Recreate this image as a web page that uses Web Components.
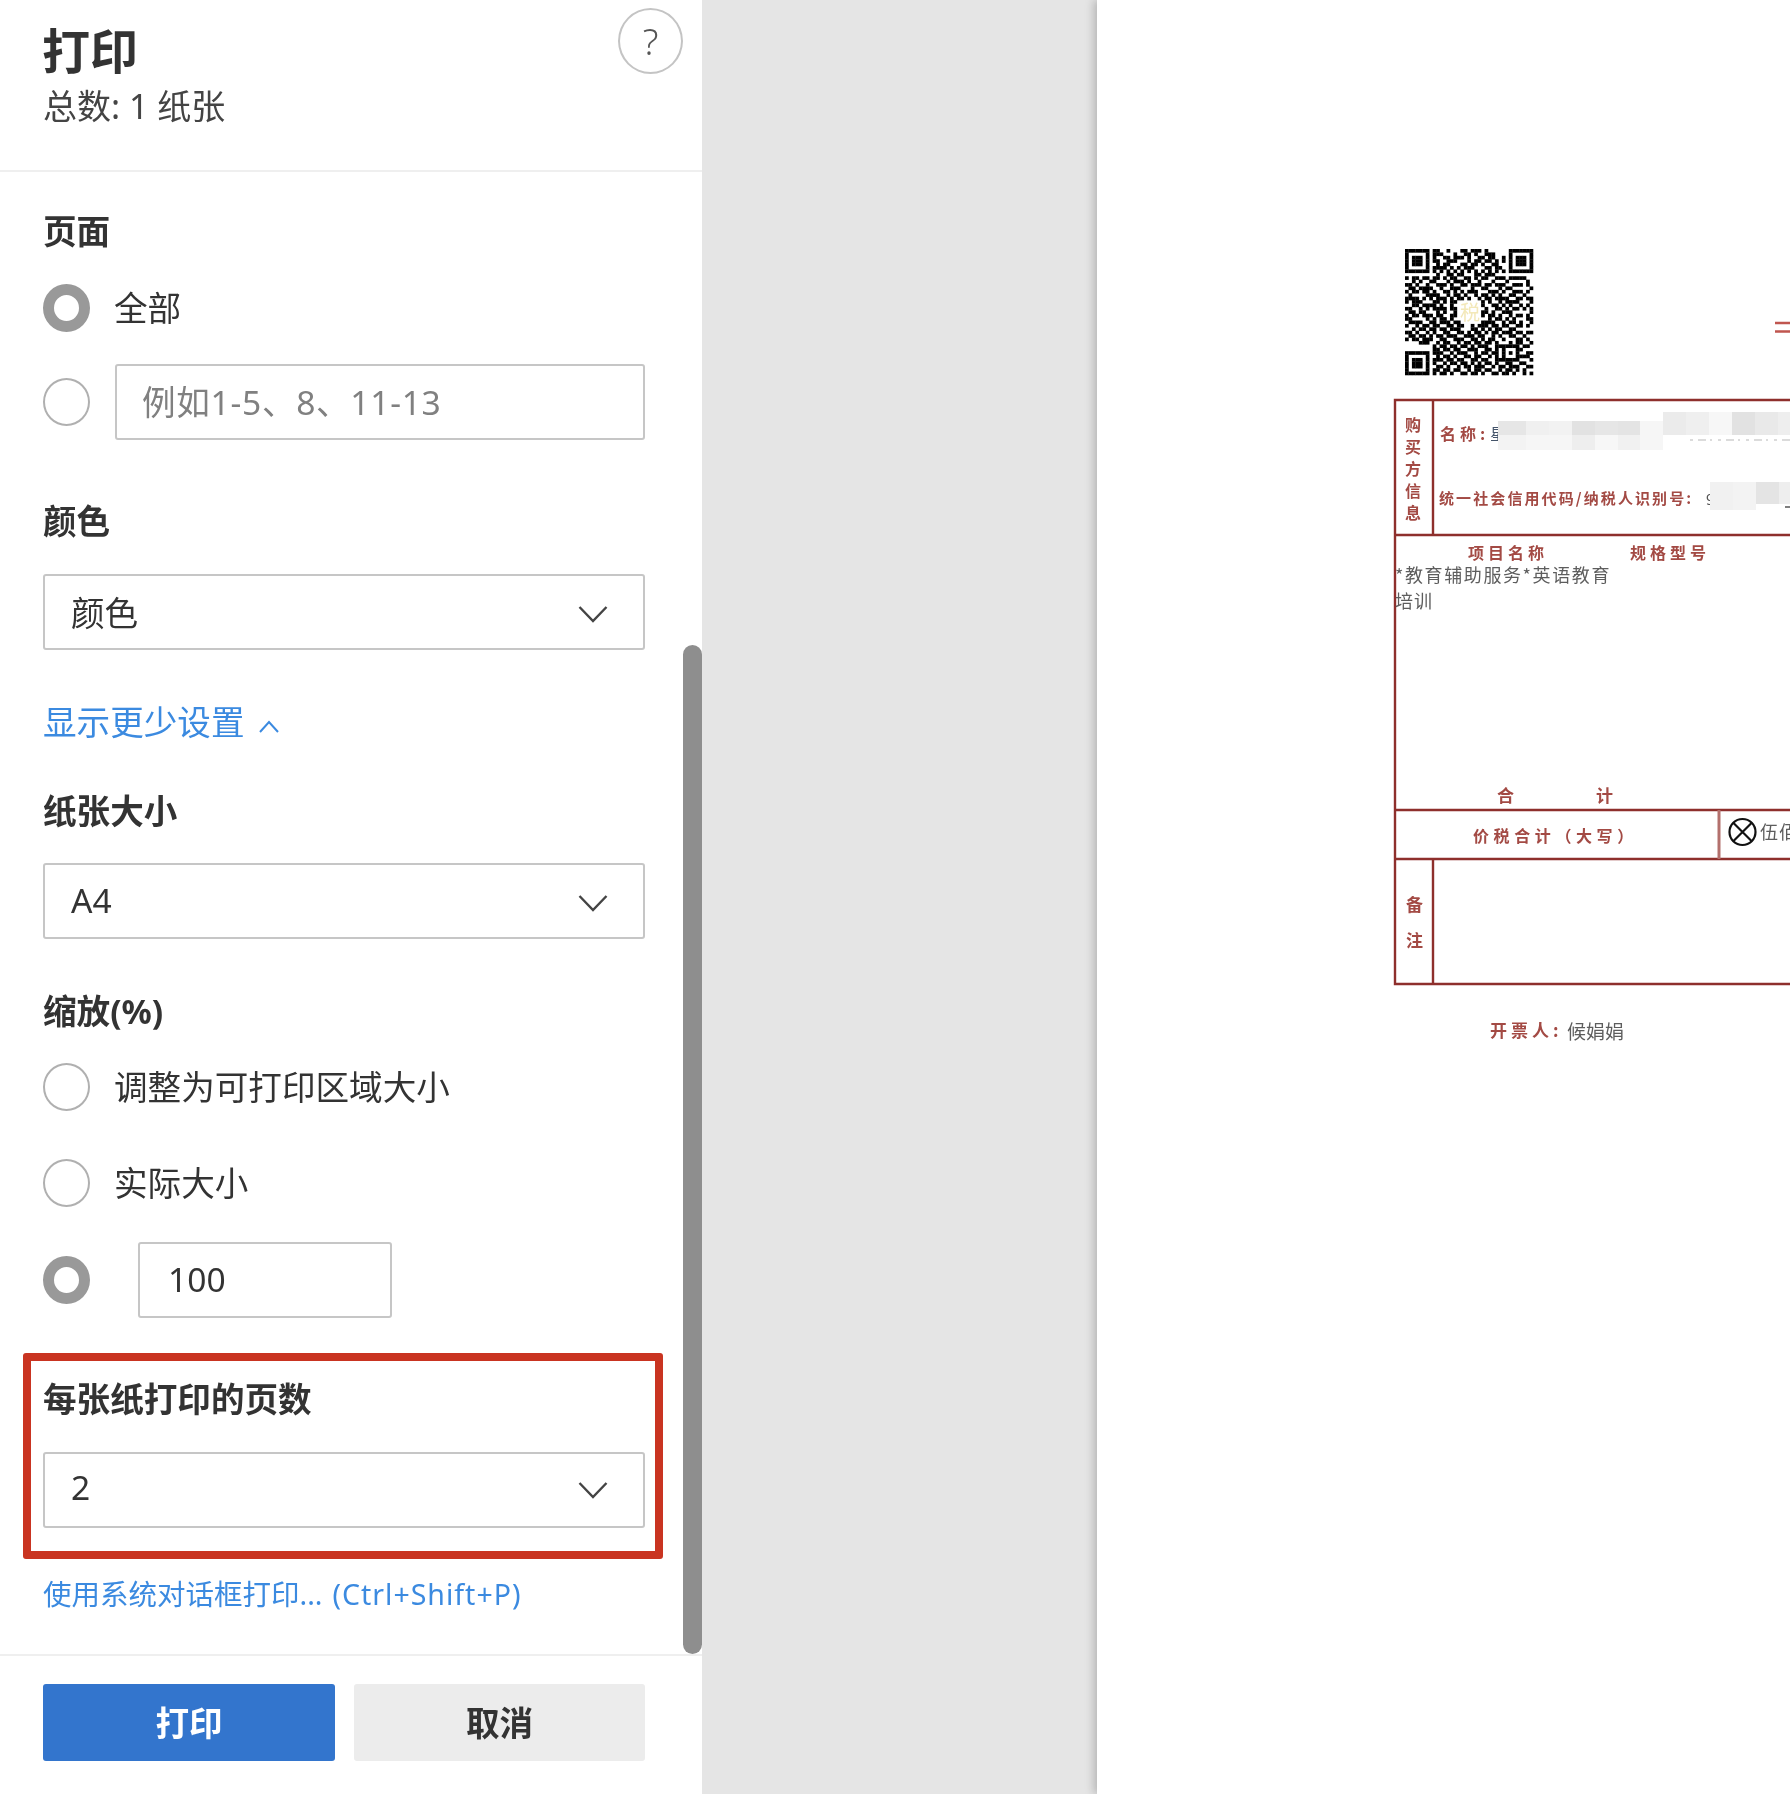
<!DOCTYPE html>
<html lang="zh">
<head>
<meta charset="utf-8">
<title>打印</title>
<style>
  html, body { margin: 0; height: 100%; overflow: hidden; background: #e5e5e5; }
  body { font-family: "Noto Sans", "Noto Sans CJK SC", sans-serif; color: #333; }
</style>
</head>
<body>
<print-dialog></print-dialog>

<script>
const FONT = '"Noto Sans", "Noto Sans CJK SC", sans-serif';

class FieldLabel extends HTMLElement {
  constructor() {
    super();
    this.attachShadow({ mode: 'open' }).innerHTML = `
      <style>
        :host { display: block; height: 40px; font: 700 33.6px/40px ${FONT}; color: #333; white-space: nowrap; }
      </style>
      <slot></slot>`;
  }
}

class RadioRow extends HTMLElement {
  constructor() {
    super();
    this.attachShadow({ mode: 'open' }).innerHTML = `
      <style>
        :host { display: flex; align-items: center; gap: 24px; font: 33.6px/40px ${FONT}; color: #333; white-space: nowrap; }
        .dot { flex: none; width: 47px; height: 48px; box-sizing: border-box; border-radius: 50%; border: 2px solid #b0b0b0; background: #fff; }
        :host([checked]) .dot { border: 11px solid #999; }
        .body { display: flex; flex: 1; min-height: 48px; align-items: center; }
      </style>
      <span class="dot"></span>
      <span class="body"><slot></slot></span>`;
  }
}

class TextBox extends HTMLElement {
  constructor() {
    super();
    this.attachShadow({ mode: 'open' }).innerHTML = `
      <style>
        :host { display: flex; align-items: center; box-sizing: border-box; height: 76px; padding-left: 25px; border: 2px solid #c6c6c6; border-radius: 3px; background: #fff; font: 33.6px/40px ${FONT}; color: #333; }
        :host([hint]) { color: #808080; letter-spacing: .7px; }
      </style>
      <slot></slot>`;
  }
}

class SelectBox extends HTMLElement {
  constructor() {
    super();
    this.attachShadow({ mode: 'open' }).innerHTML = `
      <style>
        :host { display: flex; align-items: center; justify-content: space-between; box-sizing: border-box; height: 76px; padding: 0 35px 0 26px; border: 2px solid #c6c6c6; border-radius: 3px; background: #fff; font: 33.6px/40px ${FONT}; color: #333; }
        span { margin-top: var(--text-shift, 0); }
        svg { display: block; width: 30px; height: 18px; margin-top: var(--chevron-shift, 0); }
      </style>
      <span><slot></slot></span>
      <svg viewBox="0 0 30 18"><path d="M1.5 2 L15 16 L28.5 2" fill="none" stroke="#444" stroke-width="2.4"/></svg>`;
  }
}

class HighlightBox extends HTMLElement {
  constructor() {
    super();
    this.attachShadow({ mode: 'open' }).innerHTML = `
      <style>
        :host { display: block; margin: 0 -18px 0 -20px; padding: 18px 10px 23px 12px; border: 8px solid #c93421; border-radius: 3px; }
      </style>
      <slot></slot>`;
  }
}

class DialogButton extends HTMLElement {
  constructor() {
    super();
    this.attachShadow({ mode: 'open' }).innerHTML = `
      <style>
        :host { display: flex; align-items: center; justify-content: center; height: 77px; border-radius: 3px; background: #ececec; color: #333; font: 700 33.6px/40px ${FONT}; }
        :host([primary]) { background: #3375cd; color: #fff; }
      </style>
      <slot></slot>`;
  }
}

const templateDialog = document.createElement('template');
templateDialog.innerHTML = `
  <style>
    :host { display: flex; height: 100vh; overflow: hidden; background: #e5e5e5; }
    .panel { position: relative; flex: none; width: 702px; display: flex; flex-direction: column; background: #fff; filter: blur(.35px); }
    header { flex: none; height: 170px; display: flex; justify-content: space-between; padding: 0 19px 0 42px; border-bottom: 2px solid #efefef; }
    h1 { margin: 23px 0 0; font: 700 48px/56px ${FONT}; color: #333; }
    .count { margin: 7px 0 0 1px; font: 34px/40px ${FONT}; color: #444; }
    .help { flex: none; margin-top: 8px; width: 65px; height: 66px; box-sizing: border-box; border: 2px solid #c4c4c4; border-radius: 50%; display: flex; align-items: center; justify-content: center; font: 300 37px/40px "Noto Sans", sans-serif; color: #555; }
    .scroll { flex: 1; overflow: hidden; padding: 39px 57px 0 43px; }
    .link { height: 40px; display: flex; align-items: center; color: #3b8ae0; white-space: nowrap; font: 33.6px/40px ${FONT}; }
    .link svg { margin: 8px 0 0 14px; width: 22px; height: 13px; }
    .small { font-size: 28.5px; }
    .small span { margin-left: 10px; letter-spacing: 1px; }
    .thumb { position: absolute; right: 0; top: 645px; width: 19px; height: 1009px; border-radius: 10px; background: #8e8e8e; }
    footer { flex: none; height: 110px; padding: 28px 57px 0 43px; border-top: 2px solid #efefef; display: flex; gap: 19px; box-sizing: content-box; }
    footer dialog-button { width: 292px; }
    footer dialog-button + dialog-button { width: 291px; }
    .stage { flex: 1; min-width: 0; display: flex; justify-content: flex-end; }
  </style>
  <section class="panel">
    <header>
      <div>
        <h1>打印</h1>
        <div class="count">总数: 1 纸张</div>
      </div>
      <div class="help">?</div>
    </header>
    <div class="scroll">
      <field-label>页面</field-label>
      <radio-row checked style="margin-top:33px">全部</radio-row>
      <radio-row style="margin-top:32px"><text-box hint style="flex:1;margin-left:1px">例如1-5、8、11-13</text-box></radio-row>

      <field-label style="margin-top:61px">颜色</field-label>
      <select-box style="margin-top:33px;--chevron-shift:4px;--text-shift:2px">颜色</select-box>

      <div class="link" style="margin-top:52px">显示更少设置
        <svg viewBox="0 0 22 13"><path d="M2 12 L11 2 L20 12" fill="none" stroke="#3b8ae0" stroke-width="2"/></svg>
      </div>

      <field-label style="margin-top:49px">纸张大小</field-label>
      <select-box style="margin-top:32px;--chevron-shift:4px;--text-shift:-2px">A4</select-box>

      <field-label style="margin-top:52px">缩放(%)</field-label>
      <radio-row style="margin-top:32px">调整为可打印区域大小</radio-row>
      <radio-row style="margin-top:48px">实际大小</radio-row>
      <radio-row checked style="margin-top:35px"><text-box style="width:254px;margin-left:24px;padding:0 0 3px 28px">100</text-box></radio-row>

      <highlight-box style="margin-top:35px">
        <field-label>每张纸打印的页数</field-label>
        <select-box style="margin-top:33px;--text-shift:-6px">2</select-box>
      </highlight-box>

      <div class="link small" style="margin-top:15px">使用系统对话框打印...<span>(Ctrl+Shift+P)</span></div>
    </div>
    <div class="thumb"></div>
    <footer>
      <dialog-button primary>打印</dialog-button>
      <dialog-button>取消</dialog-button>
    </footer>
  </section>
  <div class="stage"><invoice-sheet></invoice-sheet></div>
`;

class PrintDialog extends HTMLElement {
  constructor() {
    super();
    this.attachShadow({ mode: 'open' }).appendChild(templateDialog.content.cloneNode(true));
  }
}

// one char per module, finders and the alignment square get stamped over
const QR_ROWS = [
  '1111111011001000110111010000001111111',
  '1000001011100010011010011100001000001',
  '1011101010011011101001101100101011101',
  '1011101011001110001011011010101011101',
  '1011101001011000110110100110001011101',
  '1000001011110101011100011011001000001',
  '1111111010101010101010101010101111111',
  '0000000001001101100011011100000000000',
  '1011011011010110011010110011101111100',
  '0010100110001011101001000100010000010',
  '1101001001110100110111011011100111010',
  '0110111100100111000100110001011000001',
  '1011011010011010101110001110100111010',
  '0100001111001011010010110101001100100',
  '1111010101110101101001011011110011011',
  '1011100011010110000000101001011110001',
  '0011011110100100000000100110101001010',
  '1100101011110110000000010011010110101',
  '0110110001010010000000110100111000001',
  '1011011101100110000000101101001011010',
  '1100001010110100000000001011010100011',
  '0111100110111011000000111100101101001',
  '1001011011001101100101110110110011010',
  '0010110110110111000110101011001100000',
  '1101001010011001101011010110111011011',
  '0110110101101110011101100101001100100',
  '1011011100110011100110101100100011010',
  '0000111001011001011011011010001011001',
  '0000000010110110110101110011111010110',
  '1111111011011011001110011010001011000',
  '1000001011100101110010110110101110011',
  '1011101001011010011011001010001001110',
  '1011101011101101100110110011111010001',
  '1011101010010110110101011010011001100',
  '1000001001101001011011100101101110011',
  '1000001011011011001011011001011010100',
  '1111111010110100110110100110110100101',
];

function qrRects() {
  const cells = QR_ROWS.map(r => r.split('').map(Number));
  const stamp = (x0, y0, n) => {
    for (let y = -1; y <= n; y++) {
      for (let x = -1; x <= n; x++) {
        if (!cells[y0 + y] || cells[y0 + y][x0 + x] === undefined) continue;
        const d = Math.min(x, y, n - 1 - x, n - 1 - y);
        cells[y0 + y][x0 + x] = (d < 0 || d === 1) ? 0 : 1;
      }
    }
  };
  stamp(0, 0, 7);
  stamp(30, 0, 7);
  stamp(0, 30, 7);
  // alignment square
  for (let y = 0; y < 5; y++) {
    for (let x = 0; x < 5; x++) {
      const d = Math.min(x, y, 4 - x, 4 - y);
      cells[28 + y][28 + x] = d === 1 ? 0 : 1;
    }
  }
  let out = '';
  cells.forEach((row, y) => row.forEach((on, x) => {
    if (on) out += `<rect x="${x}" y="${y}" width="1.08" height="1.08"/>`;
  }));
  return out;
}

const X0 = 1097;
const RED = '#a34a44';
const GREY = '#5d5d5d';

// text, left, top, size, colour, letter spacing
const SHEET_TEXT = [
  ['购', 1405, 416, 16, RED, 0], ['买', 1405, 438, 16, RED, 0], ['方', 1405, 460, 16, RED, 0],
  ['信', 1405, 482, 16, RED, 0], ['息', 1405, 504, 16, RED, 0],
  ['名称:', 1440, 425, 16, RED, 4],
  ['星', 1490, 425, 16, '#44546a', 0],
  ['统一社会信用代码/纳税人识别号:', 1439, 490, 15, RED, 2.1],
  ['9', 1706, 491, 15, '#555', 0],
  ['项目名称', 1468, 544, 16, RED, 4],
  ['规格型号', 1630, 544, 16, RED, 4],
  ['*教育辅助服务*英语教育', 1395, 565, 18, GREY, 1.6],
  ['培训', 1395, 591, 18, GREY, 1],
  ['合', 1497, 786, 17, RED, 0],
  ['计', 1596, 786, 17, RED, 0],
  ['价税合计（大写）', 1473, 827, 16, RED, 4.6],
  ['伍佰', 1760, 822, 18, GREY, 1],
  ['备', 1406, 895, 17, RED, 0],
  ['注', 1406, 931, 17, RED, 0],
  ['开票人:', 1490, 1021, 17, RED, 4],
  ['候娟娟', 1567, 1021, 19, GREY, 0],
];

// x, y, w, h, fill of the scrubbed out parts
const MOSAIC = [
  [1498, 421, 28, 14, '#e6e6e6'], [1526, 421, 23, 14, '#f0f0f0'], [1549, 421, 23, 14, '#f2f2f2'],
  [1572, 421, 23, 14, '#e2e2e2'], [1595, 421, 23, 14, '#e6e6e6'], [1618, 421, 22, 14, '#e4e4e4'],
  [1498, 435, 28, 15, '#f3f3f3'], [1526, 435, 23, 15, '#f6f6f6'], [1549, 435, 23, 15, '#f6f6f6'],
  [1572, 435, 23, 15, '#eeeeee'], [1595, 435, 23, 15, '#f7f7f7'], [1618, 435, 22, 15, '#f1f1f1'],
  [1640, 421, 23, 29, '#f6f6f6'],
  [1663, 412, 23, 23, '#ebebeb'], [1686, 412, 23, 23, '#efefef'], [1709, 412, 23, 23, '#f7f7f7'],
  [1732, 412, 23, 23, '#e2e2e2'], [1755, 412, 23, 23, '#e9e9e9'], [1778, 412, 12, 23, '#eeeeee'],
  [1710, 482, 23, 28, '#f1f1f1'], [1733, 482, 23, 28, '#f3f3f3'], [1756, 482, 23, 22, '#e4e4e4'], [1779, 482, 11, 22, '#eeeeee'],
];

class InvoiceSheet extends HTMLElement {
  constructor() {
    super();
    this.shadow = this.attachShadow({ mode: 'open' });
  }

  connectedCallback() {
    const texts = SHEET_TEXT.map(([t, x, y, size, color, sp]) =>
      `<span class="t" style="left:${x - X0}px;top:${y}px;font-size:${size}px;color:${color};letter-spacing:${sp}px${color === RED ? ';font-weight:700' : ''}">${t}</span>`
    ).join('');
    const tiles = MOSAIC.map(([x, y, w, h, f]) =>
      `<rect x="${x}" y="${y}" width="${w}" height="${h}" fill="${f}"/>`).join('');
    this.shadow.innerHTML = `
      <style>
        :host { display: block; position: relative; width: 693px; height: 100%; background: #fff; overflow: hidden; box-shadow: -3px 0 9px rgba(0,0,0,.22); }
        .t { position: absolute; line-height: 1; white-space: nowrap; font-family: "Noto Sans CJK SC", sans-serif; filter: blur(.55px); }
        svg { position: absolute; left: 0; top: 0; }
        .soft { filter: blur(.7px); }
      </style>
      <svg width="693" height="1794" viewBox="${X0} 0 693 1794">
        <svg x="1405" y="249" width="128" height="126" viewBox="0 0 37 37" preserveAspectRatio="none" overflow="visible">
          <g fill="#000" style="filter:blur(.18px)">${qrRects()}</g>
        </svg>
        <g fill="none" stroke="#8e2f2c" stroke-width="2.4">
          <path d="M1790 400 H1395 V984 H1790"/>
          <path d="M1395 535 H1790 M1395 810 H1790 M1395 859 H1790"/>
          <path d="M1433 400 V535 M1433 859 V984"/>
          <path d="M1719 810 V859" stroke="#b3706c" stroke-width="3"/>
        </g>
        <path d="M1775 323 H1790 M1775 331.5 H1790" stroke="#c0564f" stroke-width="2.4"/>
        <g fill="none" stroke="#111" stroke-width="2.2">
          <circle cx="1742.5" cy="832" r="13"/>
          <path d="M1733 822.5 L1752 841.5 M1752 822.5 L1733 841.5"/>
        </g>
      </svg>
      <span class="t" style="left:${1460 - X0}px;top:302px;font-size:20px;color:#f3e8b8">税</span>
      ${texts}
      <svg width="693" height="1794" viewBox="${X0} 0 693 1794">
        <g class="soft">${tiles}</g>
        <path d="M1690 440 H1790" stroke="#d0d0d0" stroke-width="1.5" stroke-dasharray="3 5 8 4 2 6"/>
        <path d="M1785 507 H1790" stroke="#555" stroke-width="1.5"/>
      </svg>`;
  }
}

customElements.define('field-label', FieldLabel);
customElements.define('radio-row', RadioRow);
customElements.define('text-box', TextBox);
customElements.define('select-box', SelectBox);
customElements.define('highlight-box', HighlightBox);
customElements.define('dialog-button', DialogButton);
customElements.define('invoice-sheet', InvoiceSheet);
customElements.define('print-dialog', PrintDialog);
</script>
</body>
</html>
